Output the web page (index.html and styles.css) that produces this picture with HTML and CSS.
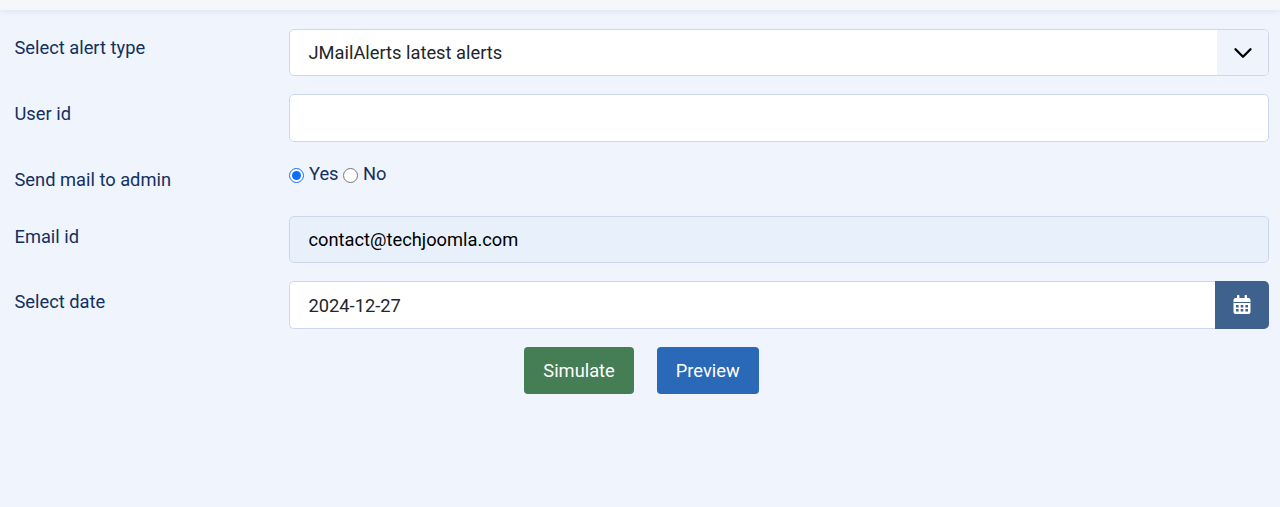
FILE: index.html
```html
<!DOCTYPE html>
<html lang="en">
<head>
<meta charset="utf-8">
<title>Simulate</title>
<link rel="stylesheet" href="styles.css">
</head>
<body>
<div class="topbar"></div>
<form class="form">
  <div class="row">
    <label class="label">Select alert type</label>
    <div class="select">
      <span class="select-value">JMailAlerts latest alerts</span>
      <span class="select-arrow">
        <svg width="20" height="20" viewBox="0 0 16 16"><path d="M2 5l6 6 6-6" fill="none" stroke="#000" stroke-width="1.9" stroke-linecap="round" stroke-linejoin="round"/></svg>
      </span>
    </div>
  </div>
  <div class="row">
    <label class="label">User id</label>
    <input class="input" type="text">
  </div>
  <div class="row row-radio">
    <label class="label">Send mail to admin</label>
    <div class="radios">
      <input class="radio" type="radio" name="admin" id="yes" checked><label for="yes">Yes</label>
      <input class="radio" type="radio" name="admin" id="no"><label for="no">No</label>
    </div>
  </div>
  <div class="row">
    <label class="label label-email">Email id</label>
    <input class="input input-filled" type="text" value="contact@techjoomla.com">
  </div>
  <div class="row">
    <label class="label label-date">Select date</label>
    <div class="date">
      <input class="input date-input" type="text" value="2024-12-27">
      <button class="date-btn" type="button" aria-label="Open calendar">
        <svg width="18" height="19" viewBox="0 0 18 19">
          <path fill="#fff" d="M4 1a1.2 1.2 0 0 1 2.4 0v2h5.2V1A1.2 1.2 0 0 1 14 1v2h1.5a2 2 0 0 1 2 2v12a2 2 0 0 1-2 2h-13a2 2 0 0 1-2-2V5a2 2 0 0 1 2-2H4z"/>
          <path fill="#3f618d" d="M.5 7h17v1h-17zM3 10h2.6v2.6H3zM7.7 10h2.6v2.6H7.7zM12.4 10H15v2.6h-2.6zM3 14h2.6v2.6H3zM7.7 14h2.6v2.6H7.7zM12.4 14H15v2.6h-2.6z"/>
        </svg>
      </button>
    </div>
  </div>
  <div class="actions">
    <button class="btn btn-green" type="button">Simulate</button>
    <button class="btn btn-blue" type="button">Preview</button>
  </div>
</form>
</body>
</html>
```
FILE: styles.css
```css
* { box-sizing: border-box; }
html, body { margin: 0; height: 100%; }
body {
  background: #f0f4fc;
  color: #12305f;
  font-family: Roboto, "Liberation Sans", sans-serif;
  font-size: 18.3px;
  line-height: 1.5;
  overflow: hidden;
}
.topbar {
  height: 10px;
  background: #f5f7fb;
  box-shadow: 0 2px 5px rgba(30, 60, 110, .07);
}
.form { padding: 19px 11px 0 14.5px; }
.row {
  display: grid;
  grid-template-columns: 274.5px 1fr;
  margin-bottom: 18px;
}
.label { line-height: 26px; padding-top: 6.2px; }
.label-email { padding-top: 8px; }
.label-date { padding-top: 7.8px; }
.input, .select {
  height: 47.4px;
  width: 100%;
  border: 1px solid #ccd8ea;
  border-radius: 5px;
  background: #fff;
  color: #22262a;
  font: inherit;
  padding: 0 18.5px;
}
.input-filled { background: #e8f0fc; color: #000; }
.select {
  display: flex;
  align-items: center;
  padding: 0 0 0 18.5px;
  overflow: hidden;
}
.select-value { flex: 1; }
.select-arrow {
  width: 51px;
  align-self: stretch;
  background: #eff3fb;
  display: flex;
  align-items: center;
  justify-content: center;
}
.row-radio { height: 38px; }
.row-radio .label { padding-top: 7px; }
.radios {
  display: flex;
  align-items: flex-start;
  line-height: 26px;
  padding-top: 1px;
}
.radio { width: 15px; height: 15px; margin: 7px 5px 0 0; accent-color: #0d6efd; }
.radios label + .radio { margin-left: 4.5px; }
.date { display: flex; }
.date-input { flex: 1; border-radius: 5px 0 0 5px; border-right: 0; padding-top: 1px; }
.date-btn {
  width: 54px;
  height: 47.4px;
  border: 0;
  border-radius: 0 5px 5px 0;
  background: #3f618d;
  display: flex;
  align-items: center;
  justify-content: center;
  padding: 0;
}
.actions {
  display: flex;
  gap: 23px;
  padding-left: 509.8px;
}
.btn {
  height: 47.4px;
  border: 0;
  border-radius: 4px;
  color: #fff;
  font: inherit;
  padding: 0 19px;
}
.btn-green { background: #457d54; }
.btn-blue { background: #2a69b8; }
```
